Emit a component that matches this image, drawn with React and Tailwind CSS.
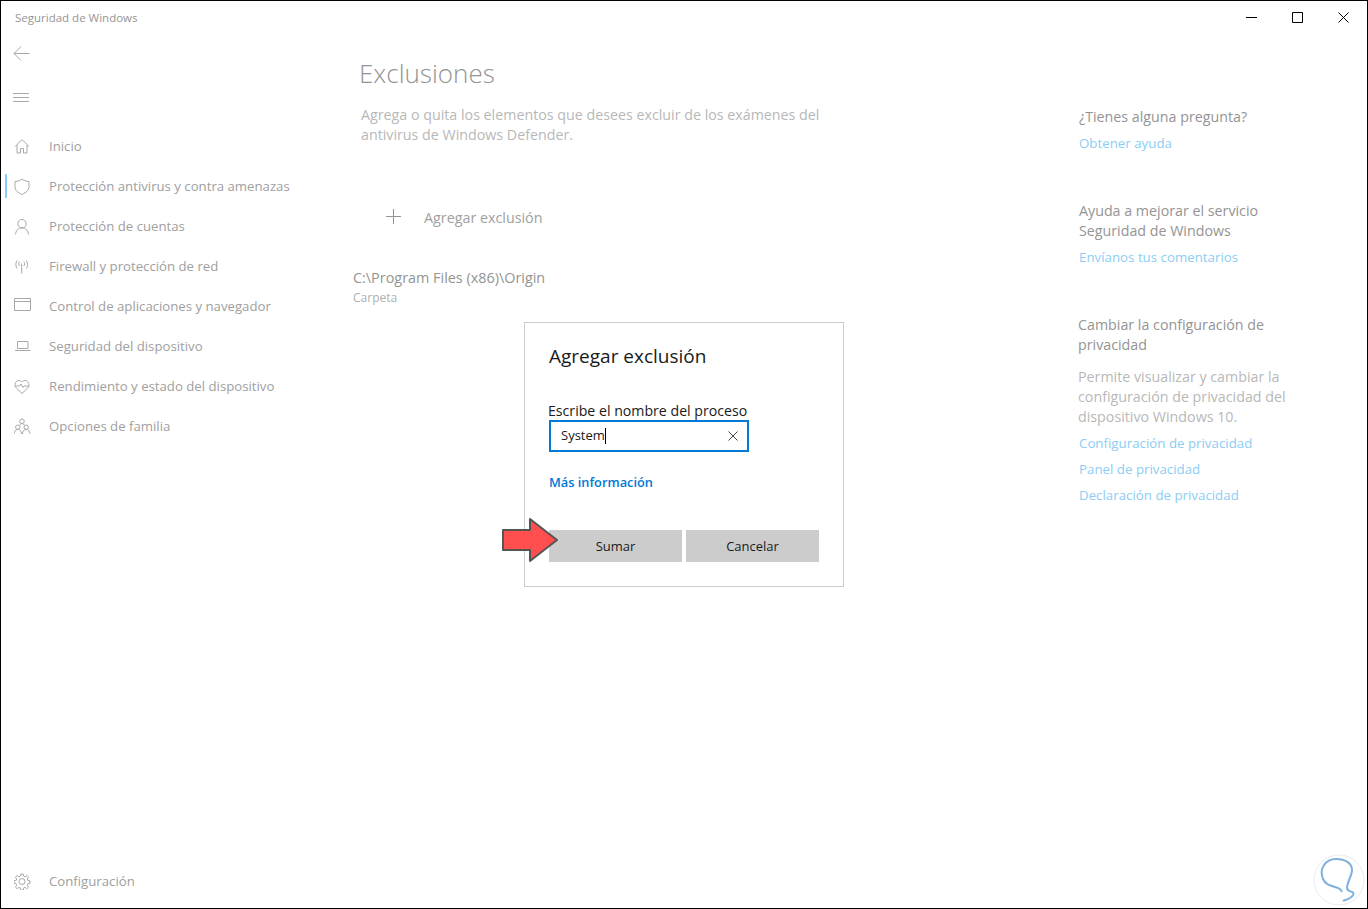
import React from 'react'

const font = { fontFamily: '"Open Sans", sans-serif' }

const icons = {
  home: <path d="M1 8.500 8 1.500l7 7M3 7v8h3.500v-4.500h3V15H13V7" />,
  shield: <path d="M8 1C6 2.600 3.500 3.400 1 3.400v5.200c0 3.600 3 6.200 7 7.900 4-1.700 7-4.300 7-7.900V3.400C12.500 3.400 10 2.600 8 1Z" />,
  user: <path d="M8 1.500a4.200 4.200 0 1 1 0 8.400 4.200 4.200 0 0 1 0-8.400ZM1.500 16.500c.3-3.800 2.700-6.600 6.500-6.600s6.200 2.800 6.500 6.600" />,
  wifi: <path d="M7.700 5.500v10M5.500 3.500c-1 1.300-1 3.200 0 4.500M9.900 3.500c1 1.300 1 3.200 0 4.500M3 2.500c-1.500 2.300-1.500 5.700 0 8M12.400 2.500c1.500 2.300 1.500 5.700 0 8" />,
  browser: <path d="M.5.500h16v12H.5ZM.5 3.500h16" />,
  laptop: <path d="M3.500 3.500h10.500v7H3.500ZM1 12.500h15.500" />,
  heart: <path d="M8 15.500 2.300 10C-.5 7.200 1.500 2.500 5 2.500c1.300 0 2.300.6 3 1.600.7-1 1.700-1.600 3-1.600 3.500 0 5.500 4.700 2.700 7.500L8 15.500ZM1 8h4.500l1.500-2 2 3.500L10 8h5" />,
  family: <path d="M8 1a2.300 2.300 0 1 1 0 4.600A2.300 2.300 0 0 1 8 1ZM3.800 7a2.200 2.200 0 1 1 0 4.400 2.200 2.200 0 0 1 0-4.400ZM12.200 7a2.200 2.200 0 1 1 0 4.400 2.200 2.200 0 0 1 0-4.400ZM0 16c.2-2.700 1.700-4.600 3.800-4.600s3.600 1.900 3.800 4.600M8.400 16c.2-2.700 1.700-4.600 3.800-4.600S15.800 13.300 16 16M5.500 7.500C6.100 6.300 7 5.600 8 5.600s1.900.7 2.500 1.900" />,
  gear: <path d="M8 5.500a3 3 0 1 1 0 6 3 3 0 0 1 0-6ZM6.800 1h2.400l.4 2.200 1.500.6 1.800-1.300 1.700 1.700-1.300 1.800.6 1.500 2.100.4v2.400l-2.100.4-.6 1.500 1.300 1.800-1.700 1.700-1.800-1.300-1.500.6-.4 2.100H6.800l-.4-2.100-1.500-.6-1.800 1.300L1.400 14l1.300-1.800-.6-1.500L0 10.300V7.900l2.100-.4.6-1.500-1.300-1.800 1.700-1.700 1.800 1.300 1.500-.6Z" />,
}

function NavIcon({ name }) {
  return (
    <svg viewBox="0 0 17 17" className="-mt-[2px] w-[17px] h-[17px] text-[#a8a8a8]" fill="none" stroke="currentColor" strokeWidth="1">
      {icons[name]}
    </svg>
  )
}

function NavItem({ icon, label, active }) {
  return (
    <div className="relative flex items-center h-10 pl-[13px] text-[13.2px] text-[#a0a0a0]">
      {active && <div className="absolute left-[4px] top-[7px] w-[2px] h-6 bg-[#8ccdf5]" />}
      <NavIcon name={icon} />
      <span className="ml-[18px]">{label}</span>
    </div>
  )
}

function HelpLink({ children }) {
  return <div className="h-[26px] leading-[26px] text-[13.3px] ml-px text-[#8ccdf5]">{children}</div>
}

function App() {
  return (
    <div style={font} className="relative flex w-[1368px] h-[909px] bg-white border border-black overflow-hidden">
      <aside className="flex flex-col w-[339px] shrink-0">
        <div className="h-[32px] pl-[14px] pt-[8px] text-[11.5px] leading-[17px] text-[#969696]">Seguridad de Windows</div>
        <div className="h-10 pl-[12px] flex items-center">
          <svg viewBox="0 0 17 15" className="w-[17px] h-[15px] text-[#a8a8a8]" fill="none" stroke="currentColor" strokeWidth="1">
            <path d="M16.500 7.500H1M8 .5l-7 7 7 7" />
          </svg>
        </div>
        <div className="h-12 pl-[12px] pt-[2px] flex items-center">
          <svg viewBox="0 0 16 10" className="w-4 h-[10px] text-[#a8a8a8]" fill="none" stroke="currentColor" strokeWidth="1">
            <path d="M0 .5h16M0 4.500h16M0 8.500h16" />
          </svg>
        </div>
        <div className="h-[6px]" />
        <NavItem icon="home" label="Inicio" />
        <NavItem icon="shield" label="Protección antivirus y contra amenazas" active />
        <NavItem icon="user" label="Protección de cuentas" />
        <NavItem icon="wifi" label="Firewall y protección de red" />
        <NavItem icon="browser" label="Control de aplicaciones y navegador" />
        <NavItem icon="laptop" label="Seguridad del dispositivo" />
        <NavItem icon="heart" label="Rendimiento y estado del dispositivo" />
        <NavItem icon="family" label="Opciones de familia" />
        <div className="mt-auto mb-[6px]">
          <NavItem icon="gear" label="Configuración" />
        </div>
      </aside>

      <main className="w-[738px] shrink-0 pt-[52px]">
        <h1 className="ml-[19px] text-[26px] leading-[40px] font-light text-[#949494]">Exclusiones</h1>
        <p className="ml-[21px] mt-[12px] w-[480px] text-[14.25px] leading-[20px] text-[#b8b8b8]">
          Agrega o quita los elementos que desees excluir de los exámenes del antivirus de Windows Defender.
        </p>
        <div className="ml-[46px] mt-[56px] flex items-center h-8 text-[14.3px] text-[#a0a0a0]">
          <svg viewBox="0 0 15 15" className="-mt-[2px] w-[15px] h-[15px] text-[#949494]" fill="none" stroke="currentColor" strokeWidth="1">
            <path d="M7.500 0v15M0 7.500h15" />
          </svg>
          <span className="ml-[23px] mt-[2px]">Agregar exclusión</span>
        </div>
        <div className="ml-[13px] mt-[35px] text-[14.4px] leading-[20px] text-[#949494]">C:\Program Files (x86)\Origin</div>
        <div className="ml-[13px] text-[12px] leading-[20px] text-[#b0b0b0]">Carpeta</div>
      </main>

      <section className="pt-[106px] w-[230px] text-[14.25px] leading-[20px]">
        <div className="ml-px text-[#949494]">¿Tienes alguna pregunta?</div>
        <div className="mt-[3px]"><HelpLink>Obtener ayuda</HelpLink></div>
        <div className="ml-px mt-[45px] text-[#949494]">Ayuda a mejorar el servicio<br />Seguridad de Windows</div>
        <div className="mt-[3px]"><HelpLink>Envíanos tus comentarios</HelpLink></div>
        <div className="mt-[45px] text-[#949494]">Cambiar la configuración de<br />privacidad</div>
        <div className="mt-[12px] text-[#b8b8b8]">Permite visualizar y cambiar la<br />configuración de privacidad del<br />dispositivo Windows 10.</div>
        <div className="mt-[3px]">
          <HelpLink>Configuración de privacidad</HelpLink>
          <HelpLink>Panel de privacidad</HelpLink>
          <HelpLink>Declaración de privacidad</HelpLink>
        </div>
      </section>

      {/* window controls */}
      <div className="absolute top-[11px] right-[18px] flex gap-[35px] text-black">
        <svg viewBox="0 0 11 11" className="w-[11px] h-[11px]" fill="none" stroke="currentColor" strokeWidth="1"><path d="M0 5.500h11" /></svg>
        <svg viewBox="0 0 11 11" className="w-[11px] h-[11px]" fill="none" stroke="currentColor" strokeWidth="1"><path d="M.5.5h10v10H.5Z" /></svg>
        <svg viewBox="0 0 11 11" className="w-[11px] h-[11px]" fill="none" stroke="currentColor" strokeWidth="1"><path d="m.5.5 10 10M10.500.5l-10 10" /></svg>
      </div>

      {/* dialog */}
      <div className="absolute left-[523px] top-[321px] w-[320px] h-[265px] bg-white border border-[#cccccc] flex flex-col pl-6 text-black">
        <h2 className="mt-[19px] text-[19px] leading-[28px] text-[#1a1a1a]">Agregar exclusión</h2>
        <label className="-ml-px mt-[32px] text-[14.15px] leading-[18px] text-[#1a1a1a]">Escribe el nombre del proceso</label>
        <div className="w-[200px] h-8 border-2 border-[#0078d7] flex items-center justify-between pl-[10px] pr-[9px]">
          <div className="flex items-center text-[13px] text-[#1a1a1a]">System<span className="w-px h-4 bg-black" /></div>
          <svg viewBox="0 0 10 10" className="w-[10px] h-[10px] text-[#444444]" fill="none" stroke="currentColor" strokeWidth="1"><path d="m.5.5 9 9M9.500.5l-9 9" /></svg>
        </div>
        <div className="mt-[20px] text-[12.8px] leading-[20px] font-semibold text-[#0078d7]">Más información</div>
        <div className="mt-[38px] flex gap-1">
          <div className="w-[133px] h-8 pt-[2px] bg-[#cccccc] flex items-center justify-center text-[13px] text-[#1a1a1a]">Sumar</div>
          <div className="w-[133px] h-8 pt-[2px] bg-[#cccccc] flex items-center justify-center text-[13px] text-[#1a1a1a]">Cancelar</div>
        </div>
      </div>

      {/* red arrow annotation */}
      <svg viewBox="0 0 58 46" className="absolute left-[500px] top-[516px] w-[58px] h-[46px]">
        <path d="M2 13h27V2l27 21-27 21V33H2Z" fill="#ff4646" fillOpacity="0.95" stroke="#555555" strokeWidth="2" strokeLinejoin="round" />
      </svg>

      {/* watermark */}
      <svg viewBox="0 0 52 52" className="absolute left-[1312px] top-[853px] w-[52px] h-[52px]" fill="none">
        <circle cx="26" cy="26" r="25" stroke="#e6ecf5" strokeWidth="1" />
        <path d="M29 38c-1-2-1-3-4-4-5-2-12-2-15-9C6 15 12 5 23 5c9 0 16 4 16 11 0 6-5 12-5 18 0 3 3 3 5 4 3 1 1 4-2 6-3 2-6 2-7 3" stroke="#7fb0de" strokeWidth="2" />
      </svg>
    </div>
  )
}

export default App
